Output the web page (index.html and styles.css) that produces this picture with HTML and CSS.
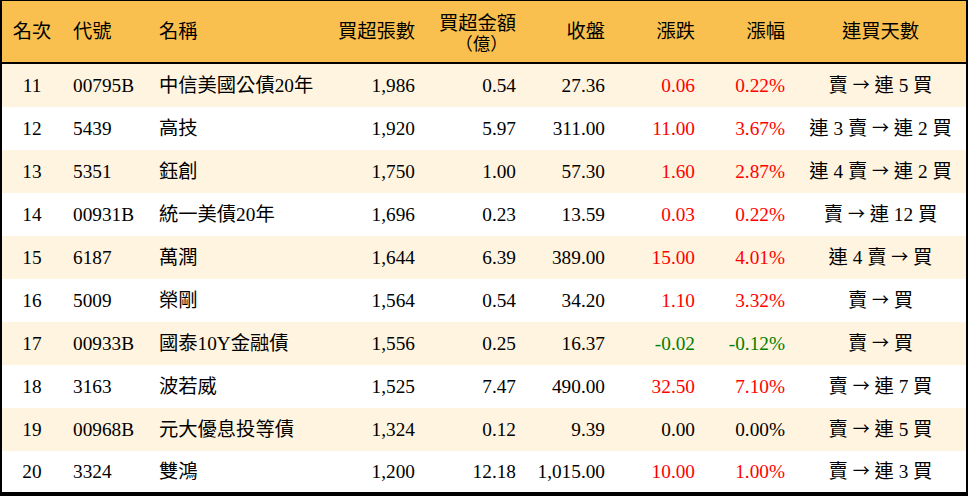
FILE: index.html
```html
<!DOCTYPE html>
<html lang="zh-Hant">
<head>
<meta charset="utf-8">
<link rel="stylesheet" href="styles.css">
</head>
<body>
<div class="frame">
<table class="rank">
  <colgroup>
    <col class="c1"><col class="c2"><col class="c3"><col class="c4"><col class="c5"><col class="c6"><col class="c7"><col class="c8"><col class="c9">
  </colgroup>
  <thead>
    <tr>
      <th class="ctr">名次</th>
      <th class="lft">代號</th>
      <th class="lft">名稱</th>
      <th class="rgt">買超張數</th>
      <th class="rgt"><span class="two"><span class="ln">買超金額</span><span class="ln cjk">（億）</span></span></th>
      <th class="rgt">收盤</th>
      <th class="rgt">漲跌</th>
      <th class="rgt">漲幅</th>
      <th class="ctr">連買天數</th>
    </tr>
  </thead>
  <tbody>
    <tr class="odd"><td class="ctr">11</td><td class="lft">00795B</td><td class="lft">中信美國公債20年</td><td class="rgt">1,986</td><td class="rgt">0.54</td><td class="rgt">27.36</td><td class="rgt up">0.06</td><td class="rgt up">0.22%</td><td class="ctr">賣 <span class="arr">→</span> 連 5 買</td></tr>
    <tr><td class="ctr">12</td><td class="lft">5439</td><td class="lft">高技</td><td class="rgt">1,920</td><td class="rgt">5.97</td><td class="rgt">311.00</td><td class="rgt up">11.00</td><td class="rgt up">3.67%</td><td class="ctr">連 3 賣 <span class="arr">→</span> 連 2 買</td></tr>
    <tr class="odd"><td class="ctr">13</td><td class="lft">5351</td><td class="lft">鈺創</td><td class="rgt">1,750</td><td class="rgt">1.00</td><td class="rgt">57.30</td><td class="rgt up">1.60</td><td class="rgt up">2.87%</td><td class="ctr">連 4 賣 <span class="arr">→</span> 連 2 買</td></tr>
    <tr><td class="ctr">14</td><td class="lft">00931B</td><td class="lft">統一美債20年</td><td class="rgt">1,696</td><td class="rgt">0.23</td><td class="rgt">13.59</td><td class="rgt up">0.03</td><td class="rgt up">0.22%</td><td class="ctr">賣 <span class="arr">→</span> 連 12 買</td></tr>
    <tr class="odd"><td class="ctr">15</td><td class="lft">6187</td><td class="lft">萬潤</td><td class="rgt">1,644</td><td class="rgt">6.39</td><td class="rgt">389.00</td><td class="rgt up">15.00</td><td class="rgt up">4.01%</td><td class="ctr">連 4 賣 <span class="arr">→</span> 買</td></tr>
    <tr><td class="ctr">16</td><td class="lft">5009</td><td class="lft">榮剛</td><td class="rgt">1,564</td><td class="rgt">0.54</td><td class="rgt">34.20</td><td class="rgt up">1.10</td><td class="rgt up">3.32%</td><td class="ctr">賣 <span class="arr">→</span> 買</td></tr>
    <tr class="odd"><td class="ctr">17</td><td class="lft">00933B</td><td class="lft">國泰10Y金融債</td><td class="rgt">1,556</td><td class="rgt">0.25</td><td class="rgt">16.37</td><td class="rgt down">-0.02</td><td class="rgt down">-0.12%</td><td class="ctr">賣 <span class="arr">→</span> 買</td></tr>
    <tr><td class="ctr">18</td><td class="lft">3163</td><td class="lft">波若威</td><td class="rgt">1,525</td><td class="rgt">7.47</td><td class="rgt">490.00</td><td class="rgt up">32.50</td><td class="rgt up">7.10%</td><td class="ctr">賣 <span class="arr">→</span> 連 7 買</td></tr>
    <tr class="odd"><td class="ctr">19</td><td class="lft">00968B</td><td class="lft">元大優息投等債</td><td class="rgt">1,324</td><td class="rgt">0.12</td><td class="rgt">9.39</td><td class="rgt">0.00</td><td class="rgt">0.00%</td><td class="ctr">賣 <span class="arr">→</span> 連 5 買</td></tr>
    <tr class="last"><td class="ctr">20</td><td class="lft">3324</td><td class="lft">雙鴻</td><td class="rgt">1,200</td><td class="rgt">12.18</td><td class="rgt">1,015.00</td><td class="rgt up">10.00</td><td class="rgt up">1.00%</td><td class="ctr">賣 <span class="arr">→</span> 連 3 買</td></tr>
  </tbody>
</table>
</div>
</body>
</html>
```

FILE: styles.css
```css
html, body {
  margin: 0;
  padding: 0;
  background: #ffffff;
}

.frame {
  width: 964px;
  border-top: 1px solid #000;
  border-left: 2px solid #000;
  border-right: 2px solid #000;
  border-bottom: 4px solid #000;
}

.rank {
  width: 964px;
  border-collapse: collapse;
  table-layout: fixed;
  font-family: "Liberation Serif", "Noto Sans CJK TC", serif;
  font-size: 19.3px;
  color: #000;
}

.c1 { width: 60px; }
.c2 { width: 86px; }
.c3 { width: 182px; }
.c4 { width: 95px; }
.c5 { width: 101px; }
.c6 { width: 89px; }
.c7 { width: 90px; }
.c8 { width: 90px; }
.c9 { width: 171px; }

.rank th {
  height: 61px;
  padding: 0;
  background: #f9c04f;
  font-weight: 400;
  border-bottom: 2px solid #000;
  vertical-align: middle;
  line-height: 20px;
}

.rank td {
  height: 43px;
  padding: 0;
  vertical-align: middle;
  line-height: 22px;
  white-space: nowrap;
}

.rank tr.last td {
  height: 41px;
}

.rank tr.odd td {
  background: #fff4e0;
}

.ctr { text-align: center; }
.lft { text-align: left; padding-left: 11px !important; }
.rgt { text-align: right; padding-right: 10px !important; }

.two {
  display: inline-flex;
  flex-direction: column;
  align-items: center;
  gap: 2px;
  padding-top: 2px;
}

.ln {
  display: block;
  line-height: 17px;
  height: 17px;
}

.cjk {
  font-family: "Noto Sans CJK TC", sans-serif;
  font-size: 17.5px;
  padding-left: 8px;
}

.arr {
  font-family: "Noto Sans CJK TC", sans-serif;
  font-size: 17px;
  position: relative;
  top: -1px;
}

.up { color: #ff0000; }
.down { color: #008000; }
```
